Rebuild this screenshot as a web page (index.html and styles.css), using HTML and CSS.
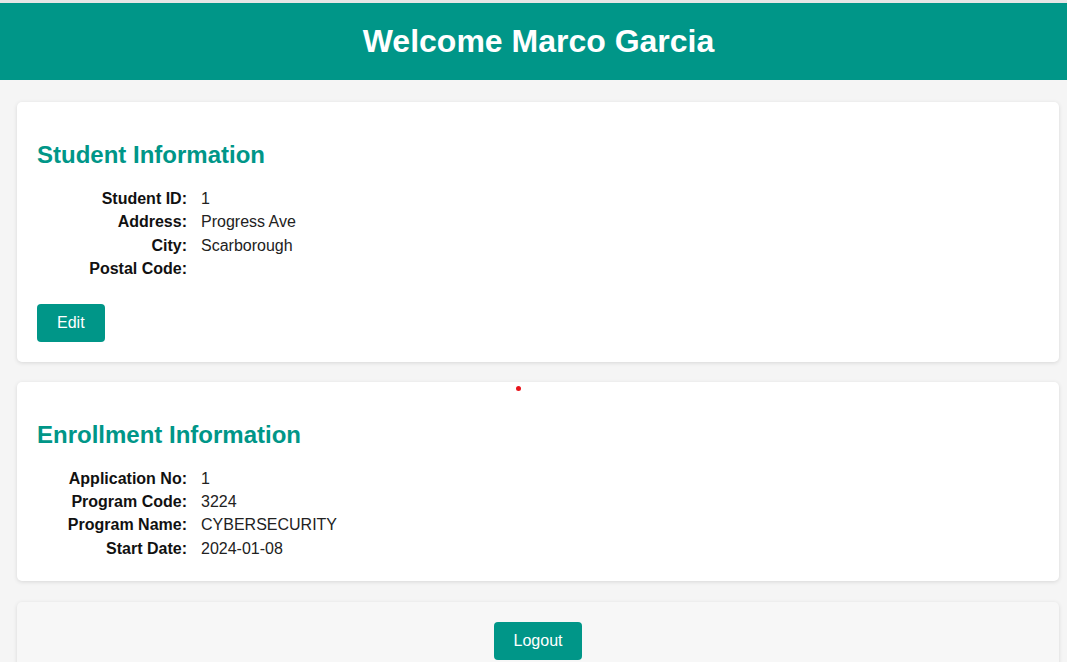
FILE: index.html
```html
<!DOCTYPE html>
<html lang="en">
<head>
<meta charset="utf-8">
<title>Student Dashboard</title>
<link rel="stylesheet" href="styles.css">
</head>
<body>
<header class="topbar">
  <h1 class="topbar-title">Welcome Marco Garcia</h1>
</header>
<main class="content">
  <section class="card">
    <h2 class="card-title">Student Information</h2>
    <div class="info">
      <div class="info-label">Student ID:</div><div class="info-value">1</div>
      <div class="info-label">Address:</div><div class="info-value">Progress Ave</div>
      <div class="info-label">City:</div><div class="info-value">Scarborough</div>
      <div class="info-label">Postal Code:</div><div class="info-value"></div>
    </div>
    <button class="btn btn-edit">Edit</button>
  </section>
  <section class="card card-enroll">
    <span class="dot"></span>
    <h2 class="card-title">Enrollment Information</h2>
    <div class="info">
      <div class="info-label">Application No:</div><div class="info-value">1</div>
      <div class="info-label">Program Code:</div><div class="info-value">3224</div>
      <div class="info-label">Program Name:</div><div class="info-value">CYBERSECURITY</div>
      <div class="info-label">Start Date:</div><div class="info-value">2024-01-08</div>
    </div>
  </section>
  <section class="card card-footer">
    <button class="btn">Logout</button>
  </section>
</main>
</body>
</html>
```

FILE: styles.css
```css
html, body {
  margin: 0;
  padding: 0;
}
body {
  background: #f5f5f5;
  font-family: "Liberation Sans", Arial, sans-serif;
  color: #222;
  overflow: hidden;
  border-top: 3px solid #e6e6e6;
}
.topbar {
  background: #009688;
  padding: 20px 0;
}
.topbar-title {
  margin: 0;
  padding-left: 10px;
  text-align: center;
  color: #fff;
  font-size: 32px;
  font-weight: bold;
}
.content {
  padding: 22px 8px 0 17px;
  display: flex;
  flex-direction: column;
  gap: 20px;
}
.card {
  background: #fff;
  border-radius: 5px;
  box-shadow: 0 1px 4px rgba(0, 0, 0, 0.12);
  padding: 20px;
}
.card-enroll {
  position: relative;
  padding-bottom: 21px;
}
.dot {
  position: absolute;
  left: 499px;
  top: 4px;
  width: 5px;
  height: 5px;
  border-radius: 50%;
  background: #e8141b;
}
.card-title {
  margin: 19px 0 18px;
  color: #009688;
  font-size: 24px;
  font-weight: bold;
}
.info {
  display: grid;
  grid-template-columns: 150px 1fr;
  column-gap: 14px;
  font-size: 16px;
  line-height: 23.4px;
}
.info-label {
  text-align: right;
  font-weight: bold;
  color: #111;
}
.info-value {
  color: #222;
  min-height: 23.4px;
}
.btn {
  background: #009688;
  color: #fff;
  border: none;
  border-radius: 4px;
  font-family: "Liberation Sans", Arial, sans-serif;
  font-size: 16px;
  line-height: 18px;
  padding: 10px 20px;
  cursor: pointer;
}
.btn-edit {
  margin-top: 23px;
}
.card-footer {
  background: #f7f7f7;
  display: flex;
  justify-content: center;
  margin-top: 1px;
  padding-bottom: 40px;
}
```
